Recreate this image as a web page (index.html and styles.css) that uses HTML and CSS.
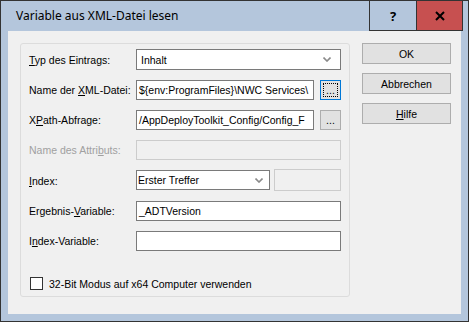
FILE: index.html
```html
<!DOCTYPE html>
<html lang="de">
<head>
    <meta charset="UTF-8">
    <title>Variable aus XML-Datei lesen</title>
    <link rel="stylesheet" href="styles.css">
</head>
<body>
    <div class="window">
        <div class="titlebar">
            <span class="title">Variable aus XML-Datei lesen</span>
            <div class="caption-buttons">
                <div class="cap-btn help">?</div>
                <div class="cap-btn close">
                    <svg width="10" height="10" viewBox="0 0 10 10">
                        <path d="M1 1 L9 9 M9 1 L1 9" stroke="#000" stroke-width="2" fill="none"/>
                    </svg>
                </div>
            </div>
        </div>

        <div class="client">
            <div class="group">
                <div class="rows">
                    <label class="lbl"><u>T</u>yp des Eintrags:</label>
                    <div class="combo wide">
                        <span class="combo-text">Inhalt</span>
                        <svg class="chev" width="8" height="5" viewBox="0 0 8 5">
                            <path d="M0.5 0.5 L4 4 L7.5 0.5" stroke="#8a8a8a" stroke-width="1.6" fill="none"/>
                        </svg>
                    </div>

                    <label class="lbl">Name der <u>X</u>ML-Datei:</label>
                    <div class="field-with-btn">
                        <div class="textbox">${env:ProgramFiles}\NWC Services\</div>
                        <div class="browse focused"><span class="focus-rect">...</span></div>
                    </div>

                    <label class="lbl">X<u>P</u>ath-Abfrage:</label>
                    <div class="field-with-btn">
                        <div class="textbox">/AppDeployToolkit_Config/Config_F</div>
                        <div class="browse"><span class="focus-rect">...</span></div>
                    </div>

                    <label class="lbl disabled">Name des Attri<u>b</u>uts:</label>
                    <div class="textbox off"></div>

                    <label class="lbl"><u>I</u>ndex:</label>
                    <div class="index-row">
                        <div class="combo small">
                            <span class="combo-text">Erster Treffer</span>
                            <svg class="chev" width="8" height="5" viewBox="0 0 8 5">
                                <path d="M0.5 0.5 L4 4 L7.5 0.5" stroke="#8a8a8a" stroke-width="1.6" fill="none"/>
                            </svg>
                        </div>
                        <div class="textbox off"></div>
                    </div>

                    <label class="lbl">Ergebnis-<u>V</u>ariable:</label>
                    <div class="textbox">_ADTVersion</div>

                    <label class="lbl">I<u>n</u>dex-Variable:</label>
                    <div class="textbox"></div>
                </div>

                <div class="check-row">
                    <span class="checkbox"></span>
                    <span>32-Bit Modus auf x64 Computer verwenden</span>
                </div>
            </div>

            <div class="side-buttons">
                <div class="btn">OK</div>
                <div class="btn">Abbrechen</div>
                <div class="btn"><u>H</u>ilfe</div>
            </div>
        </div>
    </div>
</body>
</html>
```

FILE: styles.css
```css
body {
    margin: 0;
    font-family: "Liberation Sans", Arial, sans-serif;
    font-size: 10.5px;
    color: #000;
}
.window {
    width: 469px;
    height: 322px;
    box-sizing: border-box;
    border: 1px solid #333;
    background: #b4c6dc;
    display: flex;
    flex-direction: column;
}
.titlebar {
    height: 30px;
    display: flex;
}
.title {
    flex: 1;
    padding-left: 15px;
    font-family: "Noto Sans", sans-serif;
    font-size: 12px;
    line-height: 30px;
}
.caption-buttons {
    display: flex;
    margin-right: 5px;
}
.cap-btn {
    box-sizing: border-box;
    height: 30px;
    display: flex;
    align-items: center;
    justify-content: center;
    border-left: 1px solid #333;
    border-bottom: 1px solid #333;
}
.help {
    width: 47px;
    font-family: "Noto Sans", sans-serif;
    font-size: 13px;
    font-weight: bold;
}
.close {
    width: 47px;
    background: #c75050;
    border-right: 1px solid #333;
}
.client {
    flex: 1;
    margin: 0 7px 7px;
    background: #f0f0f0;
    display: flex;
    align-items: flex-start;
    padding: 12px;
    gap: 12px;
}
.group {
    width: 330px;
    flex-shrink: 0;
    box-sizing: border-box;
    border: 1px solid #dcdcdc;
    border-radius: 3px;
    padding: 5px 8px 6px 8px;
}
.rows {
    display: grid;
    grid-template-columns: 107px minmax(0, 1fr);
    row-gap: 10px;
    align-items: center;
}
.lbl {
    white-space: nowrap;
}
.lbl.disabled {
    color: #a0a0a0;
}
.textbox {
    box-sizing: border-box;
    min-width: 0;
    height: 20px;
    line-height: 18px;
    border: 1px solid #7a7a7a;
    background: #fff;
    padding-left: 2px;
    white-space: nowrap;
    overflow: hidden;
}
.textbox.off {
    border-color: #cccccc;
    background: #f0f0f0;
}
.combo {
    box-sizing: border-box;
    height: 20px;
    border: 1px solid #7a7a7a;
    background: #fff;
    display: flex;
    align-items: center;
    justify-content: space-between;
    padding-right: 6px;
}
.combo.wide {
    height: 21px;
    padding-left: 4px;
    padding-right: 9px;
}
.combo.small {
    width: 134px;
    flex-shrink: 0;
    padding-left: 1px;
}
.field-with-btn {
    display: flex;
    gap: 6px;
    min-width: 0;
}
.field-with-btn .textbox {
    flex: 1;
}
.browse {
    box-sizing: border-box;
    flex-shrink: 0;
    width: 21px;
    height: 20px;
    border: 1px solid #adadad;
    background: #e1e1e1;
    padding: 2px;
    display: flex;
}
.browse .focus-rect {
    flex: 1;
    display: flex;
    align-items: flex-end;
    justify-content: center;
    line-height: 11px;
    border: 1px dotted transparent;
}
.browse.focused {
    border-color: #0078d7;
}
.browse.focused .focus-rect {
    border-color: #000;
}
.index-row {
    display: flex;
    gap: 4px;
}
.index-row .textbox {
    flex: 1;
    height: 22px;
    margin-top: -1px;
}
.check-row {
    display: flex;
    align-items: center;
    gap: 6px;
    margin-top: 26px;
    padding-left: 1px;
}
.checkbox {
    box-sizing: border-box;
    width: 13px;
    height: 13px;
    border: 1px solid #333;
    background: #fff;
}
.side-buttons {
    display: flex;
    flex-direction: column;
    gap: 9px;
}
.btn {
    box-sizing: border-box;
    width: 89px;
    height: 21px;
    border: 1px solid #adadad;
    background: #e1e1e1;
    display: flex;
    align-items: center;
    justify-content: center;
}
```
